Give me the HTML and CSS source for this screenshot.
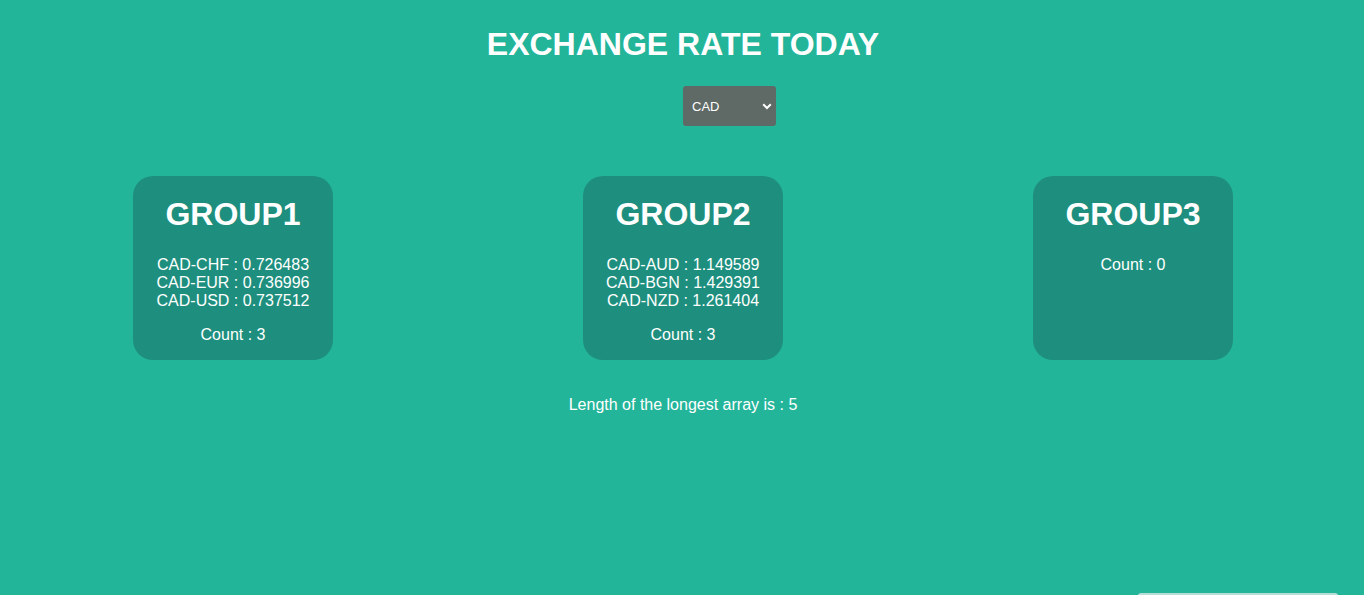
FILE: index.html
```html
<!DOCTYPE html>
<html>
<head>
<meta charset="utf-8">
<link rel="stylesheet" href="styles.css">
</head>
<body>
<h1 class="title">EXCHANGE RATE TODAY</h1>
<div class="select-row">
  <div class="select-wrap">
    <select class="currency">
      <option>CAD</option>
      <option>USD</option>
      <option>EUR</option>
    </select>
    <svg class="chevron" width="10" height="7" viewBox="0 0 10 7"><path d="M1.2 1.3 L5 5 L8.8 1.3" fill="none" stroke="#fff" stroke-width="2"/></svg>
  </div>
</div>
<div class="groups">
  <div class="col">
    <div class="card">
      <h2 class="card-title">GROUP1</h2>
      <div class="rates">
        <div>CAD-CHF : 0.726483</div>
        <div>CAD-EUR : 0.736996</div>
        <div>CAD-USD : 0.737512</div>
      </div>
      <p class="count">Count : 3</p>
    </div>
  </div>
  <div class="col">
    <div class="card">
      <h2 class="card-title">GROUP2</h2>
      <div class="rates">
        <div>CAD-AUD : 1.149589</div>
        <div>CAD-BGN : 1.429391</div>
        <div>CAD-NZD : 1.261404</div>
      </div>
      <p class="count">Count : 3</p>
    </div>
  </div>
  <div class="col">
    <div class="card">
      <h2 class="card-title">GROUP3</h2>
      <p class="count count-only">Count : 0</p>
    </div>
  </div>
</div>
<p class="longest">Length of the longest array is : 5</p>
<div class="peek"></div>
</body>
</html>
```
FILE: styles.css
```css
html, body {
  margin: 0;
  padding: 0;
  background: #23b59a;
  color: #ffffff;
  font-family: "Liberation Sans", Arial, sans-serif;
  overflow: hidden;
  height: 595px;
}

.title {
  margin: 0;
  padding-top: 26px;
  padding-left: 2px;
  font-size: 32px;
  line-height: 37px;
  font-weight: bold;
  text-align: center;
}

.select-row {
  padding-top: 23px;
  padding-left: 683px;
}

.select-wrap {
  position: relative;
  display: inline-block;
  width: 93px;
  height: 40px;
}

.currency {
  appearance: none;
  -webkit-appearance: none;
  width: 93px;
  height: 40px;
  margin: 0;
  border: none;
  border-radius: 3px;
  background: #5f6966;
  color: #ffffff;
  font-family: "Liberation Sans", Arial, sans-serif;
  font-size: 13px;
  padding: 0 0 0 9px;
  outline: none;
}

.chevron {
  position: absolute;
  right: 4px;
  top: 17px;
  pointer-events: none;
}

.groups {
  display: grid;
  grid-template-columns: 450px 450px 450px;
  padding-left: 8px;
  margin-top: 50px;
}

.col {
  display: flex;
  justify-content: center;
}

.card {
  width: 200px;
  height: 184px;
  box-sizing: border-box;
  background: #1e8f7e;
  border-radius: 20px;
  padding-top: 20px;
  text-align: center;
}

.card-title {
  margin: 0 0 23px;
  font-size: 32px;
  line-height: 37px;
  font-weight: bold;
}

.rates {
  font-size: 16px;
  line-height: 18px;
}

.count {
  margin: 16px 0 0;
  font-size: 16px;
  line-height: 18px;
}

.count-only {
  margin-top: 0;
}

.longest {
  margin: 36px 0 0;
  padding-left: 2px;
  text-align: center;
  font-size: 16px;
  line-height: 18px;
}

.peek {
  position: fixed;
  left: 1138px;
  top: 593px;
  width: 200px;
  height: 20px;
  background: #e8ecea;
  border-radius: 3px;
  opacity: 0.75;
}
```
